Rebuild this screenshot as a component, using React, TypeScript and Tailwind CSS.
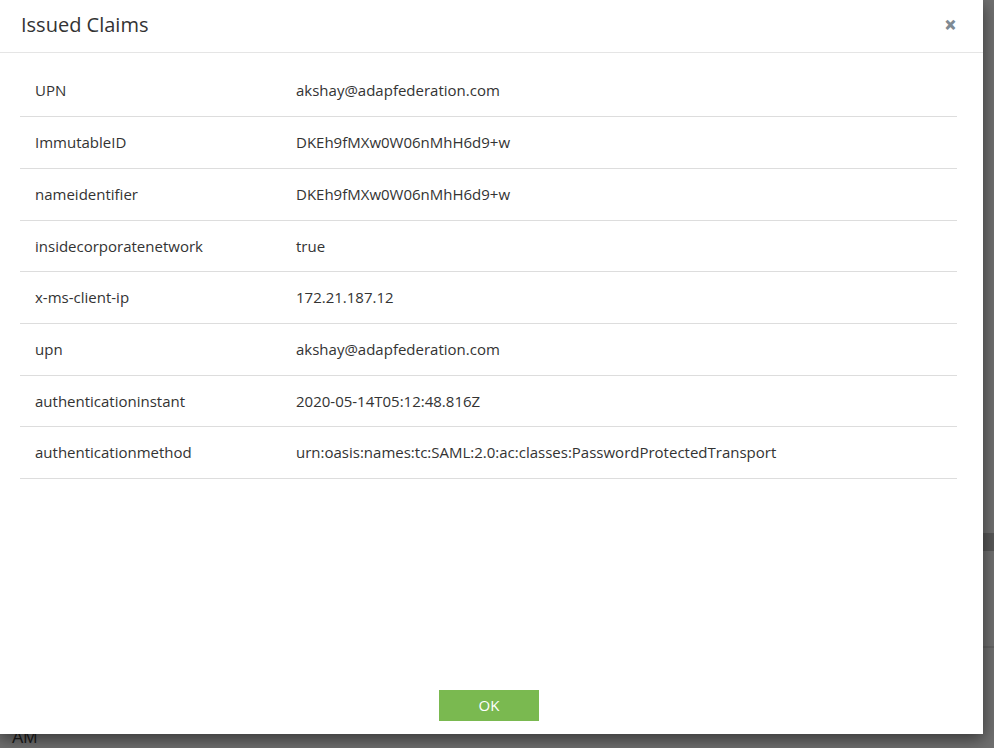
import React from 'react';

const claims: [string, string][] = [
  ['UPN', 'akshay@adapfederation.com'],
  ['ImmutableID', 'DKEh9fMXw0W06nMhH6d9+w'],
  ['nameidentifier', 'DKEh9fMXw0W06nMhH6d9+w'],
  ['insidecorporatenetwork', 'true'],
  ['x-ms-client-ip', '172.21.187.12'],
  ['upn', 'akshay@adapfederation.com'],
  ['authenticationinstant', '2020-05-14T05:12:48.816Z'],
  ['authenticationmethod', 'urn:oasis:names:tc:SAML:2.0:ac:classes:PasswordProtectedTransport'],
];

export default function App() {
  return (
    <div className="relative w-[994px] h-[748px] overflow-hidden bg-[#6f6f6f] font-['Open_Sans',sans-serif]">
      {/* page behind the backdrop */}
      <div className="flex flex-col h-full">
        <div className="h-[533px]" />
        <div className="h-[18px] bg-[#575757]" />
        <div className="h-[95px]" />
        <div className="h-[2px] bg-[#636363]" />
        <div className="flex-1 flex items-end pl-[12px] text-[17px] leading-[20px] text-[#1c1c1c] font-['Liberation_Sans',sans-serif]">
          AM
        </div>
      </div>

      {/* modal */}
      <div className="absolute left-0 top-0 w-[983px] h-[734px] bg-white shadow-[0_5px_15px_rgba(0,0,0,0.5)] flex flex-col">
        <div className="h-[53px] shrink-0 border-b border-[#e5e5e5] flex items-center justify-between pl-[21px] pr-[26px]">
          <h4 className="text-[20px] text-[#333] leading-none -mt-[2px]">Issued Claims</h4>
          <button className="text-[#7f8a93] text-[22px] font-extrabold leading-none -mt-[5px]">×</button>
        </div>

        <div className="flex-1 px-[20px] pt-[12px] pr-[26px]">
          <table className="w-full border-collapse text-[15px] text-[#333]">
            <tbody>
              {claims.map(([k, v]) => (
                <tr key={k} className="h-[51.7px] border-b border-[#dddddd]">
                  <td className="w-[261px] pl-[15px] align-middle">{k}</td>
                  <td className="pl-[15px] align-middle">{v}</td>
                </tr>
              ))}
            </tbody>
          </table>
        </div>

        <div className="flex justify-center pb-[13px] pr-[5px]">
          <button className="w-[100px] h-[31px] bg-[#7ab950] text-white text-[15px]">OK</button>
        </div>
      </div>
    </div>
  );
}
